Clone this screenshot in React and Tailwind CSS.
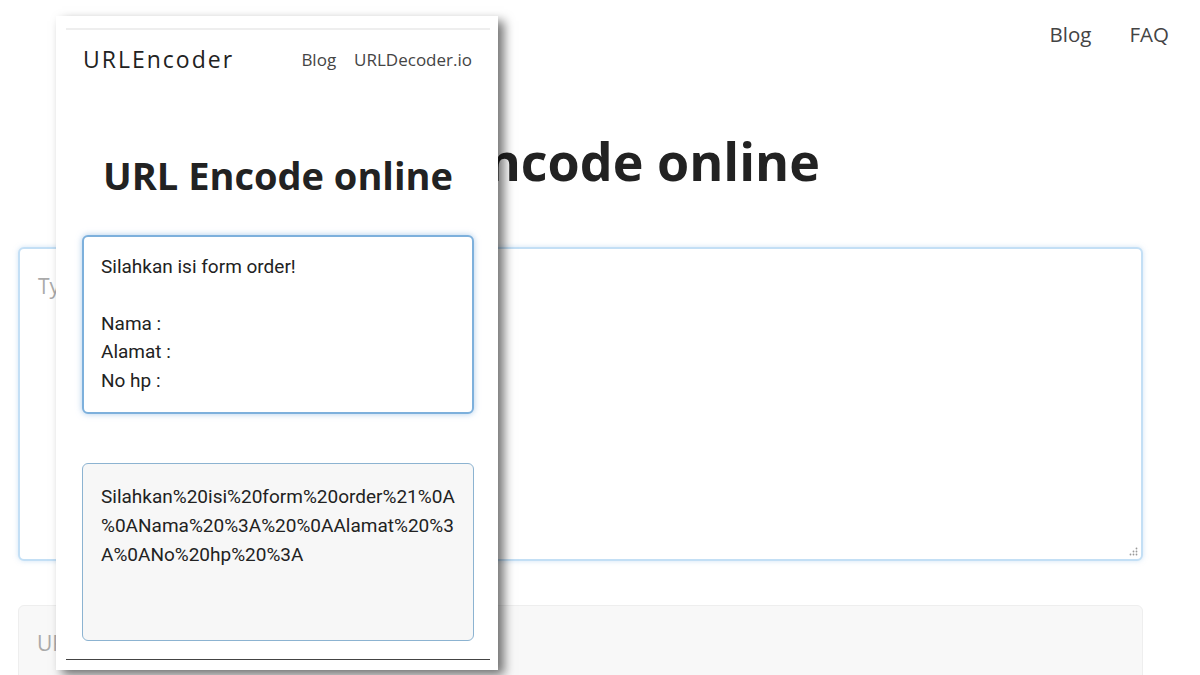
import React from 'react';

const FORM_TEXT = ['Silahkan isi form order!', '', 'Nama :', 'Alamat :', 'No hp :'];
const ENCODED = ['Silahkan%20isi%20form%20order%21%0A', '%0ANama%20%3A%20%0AAlamat%20%3', 'A%0ANo%20hp%20%3A'];

function PhoneShot() {
  return (
    <div className="absolute left-[56px] top-[16px] w-[442px] h-[654px] bg-white shadow-[6px_5px_10px_rgba(0,0,0,0.55)]">
      <div className="ml-[10px] mr-[8px] mt-[12px] h-[632px] border-t-2 border-[#eeeeee] flex flex-col">
        {/* mobile nav */}
        <div className="flex items-center justify-between pl-[17px] pr-[18px] pt-[12px]">
          <span className="text-[23px] tracking-[2px] text-[#222]">URLEncoder</span>
          <div className="flex gap-[18px] text-[17px] text-[#444]">
            <span>Blog</span>
            <span>URLDecoder.io</span>
          </div>
        </div>

        <h1 className="mt-[76px] text-center text-[38px] font-bold text-[#222] leading-[44px]">URL Encode online</h1>

        <div className="mt-[38px] mx-[16px] h-[179px] rounded-[6px] border-2 border-[#7db0dc] shadow-[0_0_6px_rgba(120,170,220,0.6)] bg-white px-[17px] pt-[16px] font-['Roboto',sans-serif] text-[19px] leading-[28.6px] text-[#222]">
          {FORM_TEXT.map((t, i) => (
            <div key={i} className="h-[28.6px]">{t}</div>
          ))}
        </div>

        <div className="mt-[49px] mx-[16px] h-[178px] rounded-[6px] border border-[#8cb3d1] bg-[#f7f7f7] px-[18px] pt-[18px] font-['Roboto',sans-serif] text-[19px] leading-[29px] text-[#222]">
          {ENCODED.map((t, i) => (
            <div key={i} className="whitespace-nowrap">{t}</div>
          ))}
        </div>

        <div className="mt-auto h-px bg-[#444]" />
      </div>
    </div>
  );
}

export default function App() {
  return (
    <div className="relative w-[1200px] h-[675px] overflow-hidden bg-white font-['Open_Sans',sans-serif]">
      {/* desktop page behind */}
      <div className="flex justify-end gap-[38px] pr-[31px] pt-[19px] text-[20.5px] text-[#444]">
        <span>Blog</span>
        <span>FAQ</span>
      </div>

      <div className="w-[1125px] ml-[18px]">
        <h1 className="mt-[81px] text-center text-[52px] font-bold text-[#222] leading-[60px]">URL Encode online</h1>

        <div className="relative mt-[56px] h-[314px] rounded-[6px] border-2 border-[#c3dff5] shadow-[0_0_5px_rgba(160,200,235,0.5)] bg-white px-[18px] pt-[22px] text-[21px] text-[#aaa]">
          Type or paste your text here
          <svg className="absolute right-[3px] bottom-[3px]" width="9" height="9" viewBox="0 0 9 9">
            <circle cx="7.5" cy="1.5" r="0.9" fill="#999" />
            <circle cx="4.5" cy="4.5" r="0.9" fill="#999" />
            <circle cx="7.5" cy="4.5" r="0.9" fill="#999" />
            <circle cx="1.5" cy="7.5" r="0.9" fill="#999" />
            <circle cx="4.5" cy="7.5" r="0.9" fill="#999" />
            <circle cx="7.5" cy="7.5" r="0.9" fill="#999" />
          </svg>
        </div>

        <div className="mt-[44px] h-[120px] rounded-[6px] border border-[#eeeeee] bg-[#f8f8f8] px-[18px] pt-[22px] text-[21px] text-[#aaa]">
          URL encoded text will appear here
        </div>
      </div>

      <PhoneShot />
    </div>
  );
}
